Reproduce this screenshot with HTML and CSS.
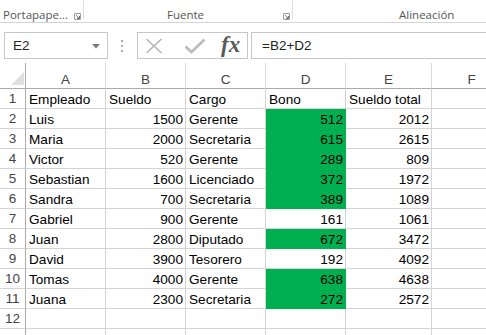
FILE: index.html
```html
<!DOCTYPE html>
<html>
<head>
<meta charset="utf-8">
<link rel="stylesheet" href="styles.css">
</head>
<body>
<div class="ribbon">
  <div class="group g1"><span class="glabel">Portapape...</span><span class="launch"><svg width="7" height="7" viewBox="0 0 7 7"><path d="M0.5 0.5H6.5V6.5H0.5Z" fill="none" stroke="#a0a0a0"/><path d="M2 2L5.5 5.5M3 5.5H5.5V3" fill="none" stroke="#707070"/></svg></span></div>
  <div class="group g2"><span class="glabel center">Fuente</span><span class="launch"><svg width="7" height="7" viewBox="0 0 7 7"><path d="M0.5 0.5H6.5V6.5H0.5Z" fill="none" stroke="#a0a0a0"/><path d="M2 2L5.5 5.5M3 5.5H5.5V3" fill="none" stroke="#707070"/></svg></span></div>
  <div class="group g3"><span class="glabel">Alineación</span></div>
</div>
<div class="fbar">
  <div class="namebox"><span>E2</span><svg class="caret" width="8" height="5" viewBox="0 0 8 5"><path d="M0 0H8L4 4.5Z" fill="#7a7a7a"/></svg></div>
  <div class="dots"><svg width="3" height="14" viewBox="0 0 3 14"><rect x="1" y="1" width="2" height="2" fill="#a8a8a8"/><rect x="1" y="6" width="2" height="2" fill="#a8a8a8"/><rect x="1" y="11" width="2" height="2" fill="#a8a8a8"/></svg></div>
  <div class="fxbox">
    <svg class="ico" width="18" height="16" viewBox="0 0 18 16"><path d="M1.5 1L16.5 15M16.5 1L1.5 15" stroke="#b4b4b4" stroke-width="1.6" fill="none"/></svg>
    <svg class="ico" width="22" height="16" viewBox="0 0 22 16"><path d="M1.5 8.5L7.5 14L20.5 1.5" stroke="#bdbdbd" stroke-width="2.8" fill="none"/></svg>
    <span class="fx">fx</span>
  </div>
  <div class="formula">=B2+D2</div>
</div>
<div class="sheet">
  <div class="corner"><div class="tri"></div></div>
  <div class="ch">A</div><div class="ch">B</div><div class="ch">C</div><div class="ch">D</div><div class="ch">E</div><div class="ch">F</div>

  <div class="rh">1</div><div class="c">Empleado</div><div class="c">Sueldo</div><div class="c">Cargo</div><div class="c">Bono</div><div class="c">Sueldo total</div><div class="c"></div>
  <div class="rh">2</div><div class="c">Luis</div><div class="c n">1500</div><div class="c">Gerente</div><div class="c n g">512</div><div class="c n">2012</div><div class="c"></div>
  <div class="rh">3</div><div class="c">Maria</div><div class="c n">2000</div><div class="c">Secretaria</div><div class="c n g">615</div><div class="c n">2615</div><div class="c"></div>
  <div class="rh">4</div><div class="c">Victor</div><div class="c n">520</div><div class="c">Gerente</div><div class="c n g">289</div><div class="c n">809</div><div class="c"></div>
  <div class="rh">5</div><div class="c">Sebastian</div><div class="c n">1600</div><div class="c">Licenciado</div><div class="c n g">372</div><div class="c n">1972</div><div class="c"></div>
  <div class="rh">6</div><div class="c">Sandra</div><div class="c n">700</div><div class="c">Secretaria</div><div class="c n g">389</div><div class="c n">1089</div><div class="c"></div>
  <div class="rh">7</div><div class="c">Gabriel</div><div class="c n">900</div><div class="c">Gerente</div><div class="c n">161</div><div class="c n">1061</div><div class="c"></div>
  <div class="rh">8</div><div class="c">Juan</div><div class="c n">2800</div><div class="c">Diputado</div><div class="c n g">672</div><div class="c n">3472</div><div class="c"></div>
  <div class="rh">9</div><div class="c">David</div><div class="c n">3900</div><div class="c">Tesorero</div><div class="c n">192</div><div class="c n">4092</div><div class="c"></div>
  <div class="rh">10</div><div class="c">Tomas</div><div class="c n">4000</div><div class="c">Gerente</div><div class="c n g">638</div><div class="c n">4638</div><div class="c"></div>
  <div class="rh">11</div><div class="c">Juana</div><div class="c n">2300</div><div class="c">Secretaria</div><div class="c n g">272</div><div class="c n">2572</div><div class="c"></div>
  <div class="rh">12</div><div class="c"></div><div class="c"></div><div class="c"></div><div class="c"></div><div class="c"></div><div class="c"></div>
  <div class="rh"></div><div class="c"></div><div class="c"></div><div class="c"></div><div class="c"></div><div class="c"></div><div class="c"></div>
</div>
</body>
</html>
```
FILE: styles.css
```css
* { box-sizing: border-box; }
html, body { margin: 0; padding: 0; background: #fff; overflow: hidden; }
body { width: 486px; height: 335px; font-family: "Liberation Sans", Arial, sans-serif; }

.ribbon {
  display: flex;
  height: 23px;
  border-bottom: 1px solid #d4d4d4;
}
.group {
  display: flex;
  align-items: flex-end;
  height: 19px;
  border-right: 1px solid #dcdcdc;
  font-family: "Open Sans", "Noto Sans", sans-serif;
  font-size: 11.5px;
  color: #555;
}
.g1 { width: 84px; padding-left: 3px; }
.g2 { width: 209px; padding-left: 0; }
.g3 { flex: 1; border-right: none; justify-content: flex-start; padding-left: 106px; }
.glabel { line-height: 15px; white-space: nowrap; margin-bottom: -3px; }
.g1 .glabel { flex: 1; }
.g2 .glabel { flex: 1; text-align: center; padding-left: 4px; }
.launch { display: flex; width: 9px; height: 15px; align-items: center; padding-top: 4px; margin-bottom: -3px; }

.fbar {
  display: flex;
  height: 27px;
  margin-top: 9px;
  margin-bottom: 4px;
}
.namebox {
  margin-left: 4px;
  width: 104px;
  border: 1px solid #c6c6c6;
  display: flex;
  align-items: center;
  justify-content: space-between;
  padding: 0 7px 0 8px;
  font-size: 13.5px;
  color: #222;
}
.caret { margin-top: 1px; }
.dots { width: 29px; display: flex; align-items: center; justify-content: center; padding-right: 2px; }
.fxbox {
  width: 111px;
  border: 1px solid #c6c6c6;
  display: flex;
  align-items: center;
  padding-left: 7px;
}
.fxbox .ico:nth-child(1) { margin-right: 21px; }
.fxbox .ico:nth-child(2) { margin-right: 15px; }
.fx {
  font-family: "Liberation Serif", serif;
  font-style: italic;
  font-weight: bold;
  font-size: 23px;
  color: #5a5a5a;
  line-height: 22px;
  margin-top: -2px;
}
.formula {
  margin-left: 3px;
  flex: 1;
  margin-right: -10px;
  border: 1px solid #c6c6c6;
  display: flex;
  align-items: center;
  padding-left: 10px;
  font-size: 13.5px;
  color: #222;
}

.sheet {
  display: grid;
  grid-template-columns: 26px 80px 80px 80px 80px 86px 80px;
  grid-auto-rows: 20px;
  grid-template-rows: 26px;
  font-size: 13.6px;
  color: #000;
}
.corner {
  border-right: 1px solid #ababab;
  border-bottom: 1px solid #ababab;
  display: flex;
  justify-content: flex-end;
  align-items: flex-end;
  padding: 0 1px 3px 0;
}
.tri {
  width: 13px;
  height: 13px;
  background: #dfdfdf;
  clip-path: polygon(100% 0, 100% 100%, 0 100%);
}
.ch {
  border-right: 1px solid #dadada;
  border-bottom: 1px solid #ababab;
  text-align: center;
  padding-top: 9px;
  line-height: 16px;
  color: #444;
  font-size: 13.5px;
}
.rh {
  border-right: 1px solid #ababab;
  border-bottom: 1px solid #d4d4d4;
  text-align: center;
  line-height: 19px;
  color: #444;
  font-size: 13.5px;
}
.c {
  border-right: 1px solid #d4d4d4;
  border-bottom: 1px solid #d4d4d4;
  line-height: 19px;
  padding: 1px 2px 0 3px;
  white-space: nowrap;
  overflow: visible;
}
.n { text-align: right; }
.g { background: #00b050; border-color: #00b050; }
```
